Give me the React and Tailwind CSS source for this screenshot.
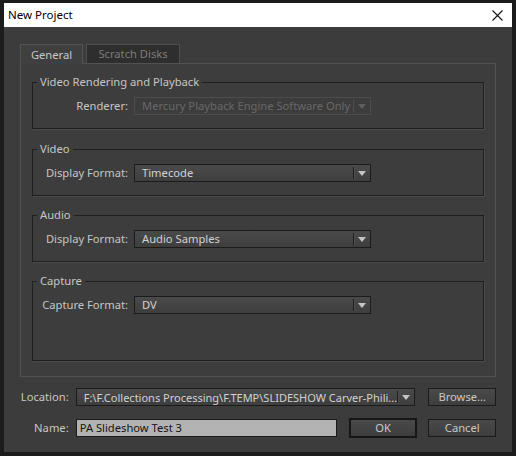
import React from "react";

const font = { fontFamily: '"Noto Sans", "Segoe UI", sans-serif' };

function Arrow({ disabled }) {
  return (
    <svg width="8" height="5" viewBox="0 0 8 5" className="block">
      <path d="M0 0 H8 L4 5 Z" fill={disabled ? "#5e5e5e" : "#c4c4c4"} />
    </svg>
  );
}

function Dropdown({ value, disabled, className = "" }) {
  return (
    <div
      className={
        "flex h-[18px] items-stretch border " +
        (disabled
          ? "border-[#4c4c4c] bg-[#3c3c3c] text-[#686868]"
          : "border-[#1b1b1b] bg-gradient-to-b from-[#4a4a4a] to-[#3e3e3e] text-[#d2d2d2]") +
        " " +
        className
      }
    >
      <div className="flex min-w-0 flex-1 items-center whitespace-nowrap pl-[7px] leading-none">
        {value}
      </div>
      <div className="my-[2px] flex w-[2px]">
        <div className={"h-full w-[1px] " + (disabled ? "bg-[#4e4e4e]" : "bg-[#1e1e1e]")} />
        <div className={"h-full w-[1px] " + (disabled ? "bg-[#404040]" : "bg-[#4e4e4e]")} />
      </div>
      <div className="flex w-[15px] items-center justify-center pr-[1px]">
        <Arrow disabled={disabled} />
      </div>
    </div>
  );
}

function Group({ title, children, pb = "pb-[13px]", className = "" }) {
  return (
    <fieldset className={"border border-[#1f1f1f] shadow-[1px_1px_0_#4b4b4b] " + pb + " " + className}>
      <legend className="ml-[4px] px-[3px] text-[11.2px] leading-[14px] text-[#c6c6c6]">
        {title}
      </legend>
      <div className="pt-[8px]">{children}</div>
    </fieldset>
  );
}

function Row({ label, value, disabled }) {
  return (
    <div className="flex items-center">
      <div className="w-[95px] text-right text-[11.2px] leading-none text-[#c6c6c6]">{label}</div>
      <Dropdown value={value} disabled={disabled} className="ml-[6px] w-[237px] text-[11.2px]" />
    </div>
  );
}

function Button({ children, primary, className = "" }) {
  return (
    <div
      className={
        "flex items-center justify-center bg-gradient-to-b from-[#4a4a4a] to-[#3d3d3d] text-[11.2px] leading-none text-[#c8c8c8] " +
        (primary ? "border-2 border-[#161616]" : "border border-[#1b1b1b]") +
        " " +
        className
      }
    >
      {children}
    </div>
  );
}

export default function App() {
  return (
    <div
      style={font}
      className="flex h-[456px] w-[516px] flex-col bg-[#1c1c1c] pb-[4px] pl-[4px] pr-[4px] pt-[3px]"
    >
      <div className="flex h-[24px] shrink-0 items-center justify-between bg-white pl-[4px] pr-[9px]">
        <span className="text-[11.5px] leading-none text-black">New Project</span>
        <svg width="11" height="11" viewBox="0 0 11 11" className="mt-[1px]">
          <path d="M0.5 0.5 L10.5 10.5 M10.5 0.5 L0.5 10.5" stroke="#111" strokeWidth="1.1" />
        </svg>
      </div>
      <div className="flex flex-1 flex-col bg-[#3c3c3c] px-[16px] pt-[17px]">
        <div className="flex items-end">
          <div className="relative z-10 -mb-[1px] flex h-[20px] w-[63px] items-center justify-center border border-b-0 border-[#535353] bg-[#3f3f3f] text-[11.2px] leading-none text-[#c8c8c8]">
            General
          </div>
          <div className="ml-[3px] flex h-[19px] w-[94px] items-center justify-center border border-b-0 border-[#4e4e4e] bg-[#2e2e2e] text-[11.2px] leading-none text-[#7c7c7c]">
            Scratch Disks
          </div>
        </div>
        <div className="flex h-[314px] flex-col gap-[12px] border border-[#525252] bg-[#3d3d3d] px-[11px] pt-[11px]">
          <Group title="Video Rendering and Playback">
            <Row label="Renderer:" value="Mercury Playback Engine Software Only" disabled />
          </Group>
          <Group title="Video" className="mt-[1px]">
            <Row label="Display Format:" value="Timecode" />
          </Group>
          <Group title="Audio">
            <Row label="Display Format:" value="Audio Samples" />
          </Group>
          <Group title="Capture" pb="pb-[46px]">
            <Row label="Capture Format:" value="DV" />
          </Group>
        </div>
        <div className="mt-[11px] flex items-center">
          <div className="w-[50px] pr-[1px] text-right text-[11.2px] leading-none text-[#c6c6c6]">Location:</div>
          <Dropdown
            value="F:\F.Collections Processing\F.TEMP\SLIDESHOW Carver-Phili..."
            className="ml-[6px] w-[342px] text-[11px]"
          />
          <Button className="ml-[13px] h-[18px] w-[68px]">Browse...</Button>
        </div>
        <div className="mt-[12px] flex items-center">
          <div className="w-[50px] pr-[1px] text-right text-[11.2px] leading-none text-[#c6c6c6]">Name:</div>
          <div className="ml-[6px] flex h-[18px] w-[263px] items-center border border-[#1b1b1b] bg-[#b3b3b3] pl-[3px] text-[11.2px] leading-none text-[#141414]">
            PA Slideshow Test 3
          </div>
          <Button primary className="ml-[12px] h-[20px] w-[69px]">OK</Button>
          <Button className="ml-[11px] h-[18px] w-[68px]">Cancel</Button>
        </div>
      </div>
    </div>
  );
}
